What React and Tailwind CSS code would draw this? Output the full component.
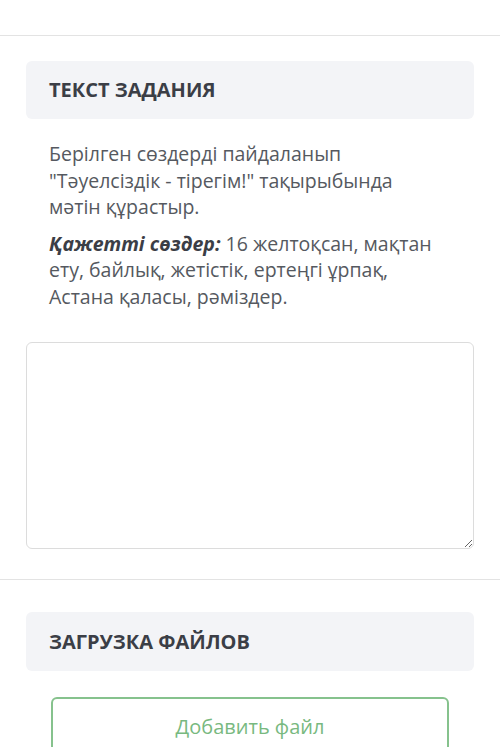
export default function App() {
  return (
    <div
      className="min-h-screen bg-white text-[#555960]"
      style={{ fontFamily: '"Open Sans", "Noto Sans", sans-serif' }}
    >
      <div className="h-[36px] border-b border-[#e3e3e3]" />

      <main className="px-[26px] pt-[25px]">
        <div className="flex h-[58px] items-center rounded-md bg-[#f3f4f7] px-[23px]">
          <h2 className="text-[20px] font-bold text-[#3b3e46]">ТЕКСТ ЗАДАНИЯ</h2>
        </div>

        <div className="pl-[23px] pr-[30px] pt-[22px] text-[19.5px] leading-[26.5px]">
          <p>
            Берілген сөздерді пайдаланып "Тәуелсіздік - тірегім!" тақырыбында
            мәтін құрастыр.
          </p>
          <p className="mt-[10px]">
            <b className="italic text-[#3b3e46]">Қажетті сөздер:</b> 16 желтоқсан,
            мақтан ету, байлық, жетістік, ертеңгі ұрпақ, Астана қаласы, рәміздер.
          </p>
        </div>

        <textarea className="mt-[32px] block h-[207px] w-full rounded-md border border-[#dcdcdc] bg-white p-3 text-[19px] outline-none" />
      </main>

      <div className="mt-[30px] border-b border-[#e3e3e3]" />

      <section className="px-[26px] pt-[32px]">
        <div className="flex h-[59px] items-center rounded-md bg-[#f3f4f7] px-[23px]">
          <h2 className="text-[20px] font-bold text-[#3b3e46]">ЗАГРУЗКА ФАЙЛОВ</h2>
        </div>

        <div className="px-[25px] pt-[26px] pb-8">
          <button className="flex h-[60px] w-full items-center justify-center rounded-md border-2 border-[#86c28d] bg-white text-[20px] text-[#78b980]">
            Добавить файл
          </button>
        </div>
      </section>
    </div>
  );
}
